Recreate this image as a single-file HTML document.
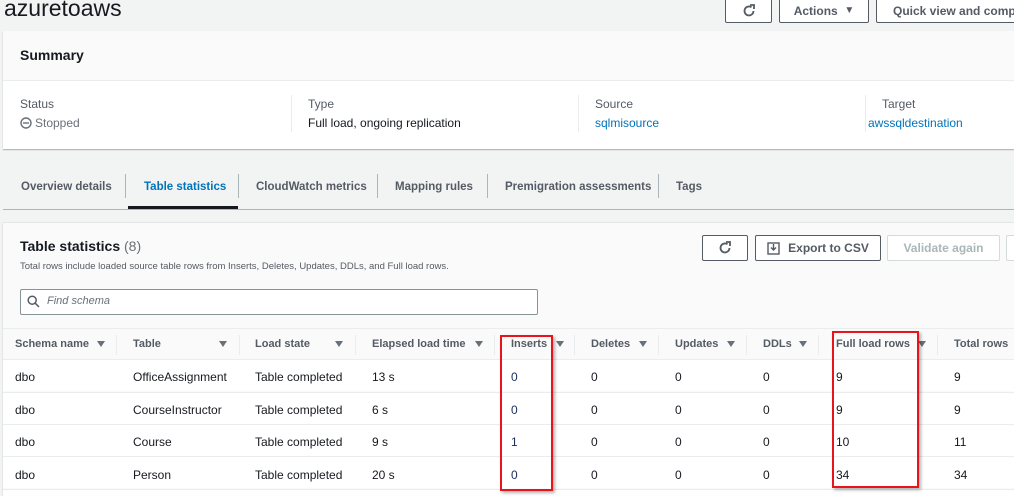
<!DOCTYPE html>
<html><head><meta charset="utf-8"><style>
*{box-sizing:border-box;margin:0;padding:0}
html,body{width:1014px;height:496px;overflow:hidden}
body{background:#f2f3f3;font-family:"Liberation Sans",Arial,sans-serif;color:#16191f;position:relative}
.a{position:absolute;white-space:nowrap}
.btn{position:absolute;border:1px solid #545b64;background:#fff;border-radius:2px;font-weight:bold;font-size:12px;color:#545b64;display:flex;align-items:center;justify-content:center;white-space:nowrap;overflow:hidden}
.lbl{font-size:12px;color:#545b64}
.val{font-size:12px}
.link{color:#0073bb}
.tab{position:absolute;top:181px;font-size:11.5px;font-weight:bold;color:#545b64;white-space:nowrap}
.tsep{position:absolute;top:174px;width:1px;height:24px;background:#aab7b8}
.th{position:absolute;top:338px;font-size:11px;font-weight:bold;color:#545b64;white-space:nowrap}
.hs{position:absolute;top:335px;width:1px;height:20px;background:#eaeded}
.tri{position:absolute;top:341px;width:0;height:0;border-left:4px solid transparent;border-right:4px solid transparent;border-top:6px solid #687078}
.td{position:absolute;font-size:12px;white-space:nowrap}
.row{position:absolute;left:3px;width:1011px;height:32px;background:#fff;border-top:1px solid #eaeded}
.red{position:absolute;border:2px solid #e8141c;box-shadow:2px 2px 3px rgba(0,0,0,.3)}
</style></head><body>
<div class="a" style="left:4px;top:-5px;font-size:23px;color:#16191f">azuretoaws</div>
<div class="btn" style="left:725px;top:-2px;width:47px;height:25px"><svg width="14" height="14" viewBox="0 0 14 14"><path d="M11.5 7A4.5 4.5 0 1 1 9.5 3.2" fill="none" stroke="#545b64" stroke-width="1.8"/><path d="M8 1h4v4" fill="none" stroke="#545b64" stroke-width="1.8"/></svg></div>
<div class="btn" style="left:779px;top:-2px;width:90px;height:25px">Actions&nbsp;&nbsp;<span style="font-size:10px">▼</span></div>
<div class="btn" style="left:876px;top:-2px;width:150px;height:25px;justify-content:flex-start;padding-left:16px">Quick view and compare</div>

<div class="a" style="left:3px;top:31px;width:1011px;height:118px;background:#fff;box-shadow:0 1px 1px rgba(0,0,0,.3)">
 <div style="height:50px;background:#fafafa;border-bottom:1px solid #eaeded"></div>
</div>
<div class="a" style="left:20px;top:47px;font-size:14px;font-weight:bold">Summary</div>
<div class="a lbl" style="left:20px;top:97px">Status</div>
<div class="a" style="left:20px;top:116px;font-size:12px;color:#687078;display:flex;align-items:center"><svg width="12" height="12" viewBox="0 0 12 12" style="margin-right:3px"><circle cx="6" cy="6" r="5" fill="none" stroke="#687078" stroke-width="1.4"/><path d="M3 6h6" stroke="#687078" stroke-width="1.4"/></svg>Stopped</div>
<div class="a" style="left:291px;top:95px;width:1px;height:37px;background:#eaeded"></div>
<div class="a lbl" style="left:308px;top:97px">Type</div>
<div class="a val" style="left:308px;top:116px">Full load, ongoing replication</div>
<div class="a" style="left:578px;top:95px;width:1px;height:37px;background:#eaeded"></div>
<div class="a lbl" style="left:595px;top:97px">Source</div>
<div class="a val link" style="left:595px;top:116px">sqlmisource</div>
<div class="a" style="left:865px;top:95px;width:1px;height:37px;background:#eaeded"></div>
<div class="a lbl" style="left:882px;top:97px">Target</div>
<div class="a val link" style="left:868px;top:116px">awssqldestination</div>

<div class="tab" style="left:21px">Overview details</div>
<div class="tsep" style="left:125px"></div>
<div class="tab" style="left:144px;color:#0073bb">Table statistics</div>
<div class="a" style="left:128px;top:206px;width:110px;height:3px;background:#16191f"></div>
<div class="tsep" style="left:238px"></div>
<div class="tab" style="left:256px">CloudWatch metrics</div>
<div class="tsep" style="left:377px"></div>
<div class="tab" style="left:395px">Mapping rules</div>
<div class="tsep" style="left:487px"></div>
<div class="tab" style="left:505px">Premigration assessments</div>
<div class="tsep" style="left:658px"></div>
<div class="tab" style="left:676px">Tags</div>
<div class="a" style="left:3px;top:209px;width:1011px;height:1px;background:#aab7b8"></div>

<div class="a" style="left:3px;top:223px;width:1011px;height:273px;background:#fafafa;box-shadow:0 0 1px rgba(0,0,0,.3)"></div>
<div class="a" style="left:20px;top:238px;font-size:14px;font-weight:bold">Table statistics <span style="font-weight:normal;color:#687078">(8)</span></div>
<div class="a" style="left:20px;top:261px;font-size:9.5px;color:#545b64">Total rows include loaded source table rows from Inserts, Deletes, Updates, DDLs, and Full load rows.</div>
<div class="btn" style="left:702px;top:235px;width:46px;height:26px"><svg width="14" height="14" viewBox="0 0 14 14"><path d="M11.5 7A4.5 4.5 0 1 1 9.5 3.2" fill="none" stroke="#545b64" stroke-width="1.8"/><path d="M8 1h4v4" fill="none" stroke="#545b64" stroke-width="1.8"/></svg></div>
<div class="btn" style="left:755px;top:235px;width:126px;height:26px"><svg width="13" height="13" viewBox="0 0 13 13" style="margin-right:8px"><rect x="1" y="1" width="11" height="11" fill="none" stroke="#545b64" stroke-width="1.4"/><path d="M6.5 2v6M4 5.5l2.5 2.5 2.5-2.5" fill="none" stroke="#545b64" stroke-width="1.4"/></svg>Export to CSV</div>
<div class="btn" style="left:887px;top:235px;width:113px;height:26px;border-color:#d5dbdb;color:#aab7b8">Validate again</div>
<div class="btn" style="left:1006px;top:235px;width:20px;height:26px;border-color:#d5dbdb"></div>
<div class="a" style="left:20px;top:289px;width:518px;height:26px;border:1px solid #879596;background:#fff;border-radius:2px"></div>
<svg class="a" style="left:27px;top:295px" width="13" height="13" viewBox="0 0 13 13"><circle cx="5.2" cy="5.2" r="4" fill="none" stroke="#545b64" stroke-width="1.5"/><path d="M8.2 8.2l3.8 3.8" stroke="#545b64" stroke-width="1.5"/></svg>
<div class="a" style="left:47px;top:295px;font-size:11px;font-style:italic;color:#687078">Find schema</div>

<div class="a" style="left:3px;top:328px;width:1011px;height:1px;background:#eaeded"></div>
<div class="th" style="left:15px">Schema name</div><div class="tri" style="left:97px"></div><div class="hs" style="left:116px"></div>
<div class="th" style="left:133px">Table</div><div class="tri" style="left:219px"></div><div class="hs" style="left:239px"></div>
<div class="th" style="left:255px">Load state</div><div class="tri" style="left:335px"></div><div class="hs" style="left:355px"></div>
<div class="th" style="left:372px">Elapsed load time</div><div class="tri" style="left:475px"></div><div class="hs" style="left:494px"></div>
<div class="th" style="left:511px">Inserts</div><div class="tri" style="left:556px"></div><div class="hs" style="left:574px"></div>
<div class="th" style="left:591px">Deletes</div><div class="tri" style="left:639px"></div><div class="hs" style="left:658px"></div>
<div class="th" style="left:675px">Updates</div><div class="tri" style="left:727px"></div><div class="hs" style="left:746px"></div>
<div class="th" style="left:763px">DDLs</div><div class="tri" style="left:799px"></div><div class="hs" style="left:818px"></div>
<div class="th" style="left:836px">Full load rows</div><div class="tri" style="left:918px"></div><div class="hs" style="left:937px"></div>
<div class="th" style="left:954px">Total rows</div>

<div class="row" style="top:359px"></div>
<div class="row" style="top:392px"></div>
<div class="row" style="top:424px"></div>
<div class="row" style="top:456px"></div>
<div class="row" style="top:489px;height:7px"></div>

<div class="td" style="left:15px;top:370px">dbo</div><div class="td" style="left:133px;top:370px">OfficeAssignment</div><div class="td" style="left:255px;top:370px">Table completed</div><div class="td" style="left:372px;top:370px">13 s</div><div class="td" style="left:511px;top:370px;color:#1a2d5a">0</div><div class="td" style="left:591px;top:370px">0</div><div class="td" style="left:675px;top:370px">0</div><div class="td" style="left:763px;top:370px">0</div><div class="td" style="left:836px;top:370px">9</div><div class="td" style="left:954px;top:370px">9</div>
<div class="td" style="left:15px;top:403px">dbo</div><div class="td" style="left:133px;top:403px">CourseInstructor</div><div class="td" style="left:255px;top:403px">Table completed</div><div class="td" style="left:372px;top:403px">6 s</div><div class="td" style="left:511px;top:403px;color:#1a2d5a">0</div><div class="td" style="left:591px;top:403px">0</div><div class="td" style="left:675px;top:403px">0</div><div class="td" style="left:763px;top:403px">0</div><div class="td" style="left:836px;top:403px">9</div><div class="td" style="left:954px;top:403px">9</div>
<div class="td" style="left:15px;top:435px">dbo</div><div class="td" style="left:133px;top:435px">Course</div><div class="td" style="left:255px;top:435px">Table completed</div><div class="td" style="left:372px;top:435px">9 s</div><div class="td" style="left:511px;top:435px;color:#1a2d5a">1</div><div class="td" style="left:591px;top:435px">0</div><div class="td" style="left:675px;top:435px">0</div><div class="td" style="left:763px;top:435px">0</div><div class="td" style="left:836px;top:435px">10</div><div class="td" style="left:954px;top:435px">11</div>
<div class="td" style="left:15px;top:468px">dbo</div><div class="td" style="left:133px;top:468px">Person</div><div class="td" style="left:255px;top:468px">Table completed</div><div class="td" style="left:372px;top:468px">20 s</div><div class="td" style="left:511px;top:468px;color:#1a2d5a">0</div><div class="td" style="left:591px;top:468px">0</div><div class="td" style="left:675px;top:468px">0</div><div class="td" style="left:763px;top:468px">0</div><div class="td" style="left:836px;top:468px">34</div><div class="td" style="left:954px;top:468px">34</div>

<div class="red" style="left:500px;top:335px;width:53px;height:156px"></div>
<div class="red" style="left:832px;top:331px;width:87px;height:157px"></div>
</body></html>
